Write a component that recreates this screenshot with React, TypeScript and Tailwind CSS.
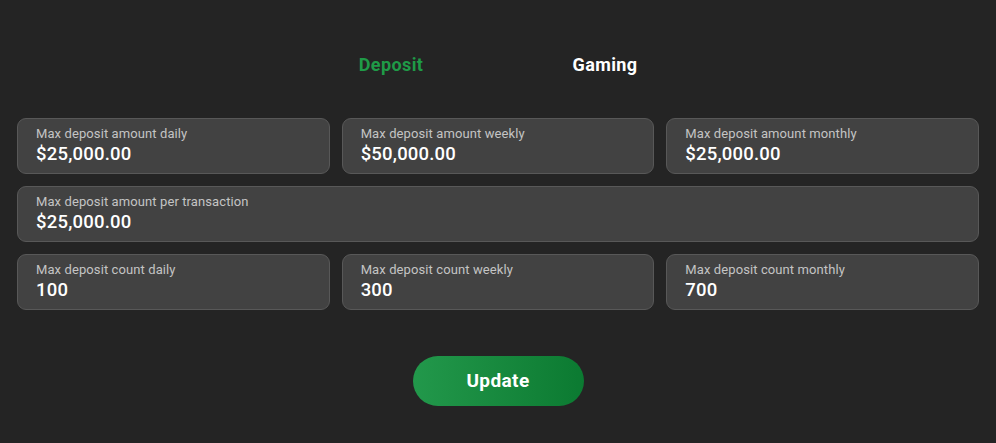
import React from 'react';

const fields = [
  { label: 'Max deposit amount daily', value: '$25,000.00', span: false },
  { label: 'Max deposit amount weekly', value: '$50,000.00', span: false },
  { label: 'Max deposit amount monthly', value: '$25,000.00', span: false },
  { label: 'Max deposit amount per transaction', value: '$25,000.00', span: true },
  { label: 'Max deposit count daily', value: '100', span: false },
  { label: 'Max deposit count weekly', value: '300', span: false },
  { label: 'Max deposit count monthly', value: '700', span: false },
];

function Field({ label, value, span }: { label: string; value: string; span: boolean }) {
  return (
    <div
      className={`${span ? 'col-span-3' : ''} h-[56px] rounded-[9px] border border-[#585858] bg-[#424242] pl-[18px] pt-[6px] flex flex-col`}
    >
      <span className="text-[13px] leading-[17px] tracking-[0.1px] text-[#c4c4c4]">{label}</span>
      <span className="text-[18.5px] leading-[24px] tracking-[0.2px] text-white font-medium">{value}</span>
    </div>
  );
}

export default function App() {
  return (
    <div
      className="w-[996px] h-[443px] bg-[#242424] overflow-hidden"
      style={{ fontFamily: 'Roboto, "Liberation Sans", sans-serif' }}
    >
      {/* Tabs */}
      <div className="flex justify-center pt-[53px]">
        <div className="flex w-[428px]">
          <button className="w-[214px] text-[18px] leading-[24px] tracking-[0.4px] font-bold text-[#1f9a47]">Deposit</button>
          <button className="w-[214px] text-[18px] leading-[24px] tracking-[0.4px] font-bold text-white">Gaming</button>
        </div>
      </div>

      {/* Limits grid */}
      <div className="grid grid-cols-3 gap-x-[12px] gap-y-[12px] px-[17px] mt-[41px]">
        {fields.map((f) => (
          <Field key={f.label} {...f} />
        ))}
      </div>

      <div className="flex justify-center mt-[46px]">
        <button className="w-[171px] h-[50px] rounded-full bg-gradient-to-r from-[#22984b] to-[#0b7a31] text-white text-[19px] tracking-[0.4px] font-bold">
          Update
        </button>
      </div>
    </div>
  );
}
